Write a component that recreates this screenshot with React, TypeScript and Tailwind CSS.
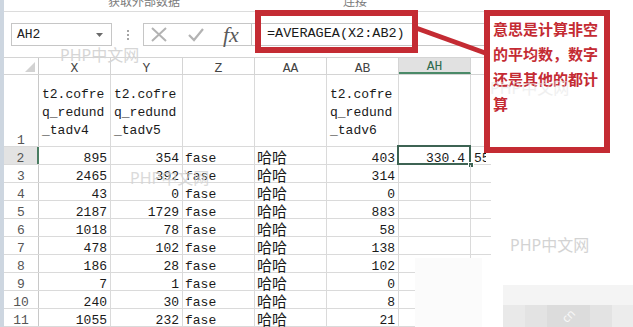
import React from 'react';

const mono = "font-['Liberation_Mono','Noto_Sans_CJK_SC',monospace]";

type Row = { n: number; x: string; y: string; ab: string };

const rows: Row[] = [
  { n: 2, x: '895', y: '354', ab: '403' },
  { n: 3, x: '2465', y: '392', ab: '314' },
  { n: 4, x: '43', y: '0', ab: '0' },
  { n: 5, x: '2187', y: '1729', ab: '883' },
  { n: 6, x: '1018', y: '78', ab: '58' },
  { n: 7, x: '478', y: '102', ab: '138' },
  { n: 8, x: '186', y: '28', ab: '102' },
  { n: 9, x: '7', y: '1', ab: '0' },
  { n: 10, x: '240', y: '30', ab: '8' },
  { n: 11, x: '1055', y: '232', ab: '21' },
];

const NumCell = ({ v }: { v: string }) => (
  <div className="w-[72px] shrink-0 border-r border-[#dadada] flex items-end justify-end pr-[3px]">
    <span className="leading-[11px] whitespace-nowrap">{v}</span>
  </div>
);

const TextCell = ({ v }: { v: string }) => (
  <div className="w-[72px] shrink-0 border-r border-[#dadada] flex items-end pl-[2px]">
    <span className="leading-[11px] whitespace-nowrap">{v}</span>
  </div>
);

const CjkCell = ({ v }: { v: string }) => (
  <div className="w-[72px] shrink-0 border-r border-[#dadada] flex items-end pl-[2px] font-['Noto_Sans_CJK_SC',sans-serif] text-[15px]">
    <span className="leading-[15px] whitespace-nowrap">{v}</span>
  </div>
);

const Wrapped = ({ lines }: { lines: string[] }) => (
  <div className="w-[72px] shrink-0 border-r border-[#dadada] flex flex-col justify-end pl-[3px] pb-[6px] leading-[18px]">
    {lines.map(l => (
      <span key={l} className="whitespace-nowrap">{l}</span>
    ))}
  </div>
);

const HeadCell = ({ label }: { label: string }) => (
  <div className="w-[72px] shrink-0 border-r border-[#d4d4d4] flex items-end justify-center text-[#444]">
    <span className="leading-[11px]">{label}</span>
  </div>
);

const Watermark = ({ className }: { className: string }) => (
  <div className={`absolute font-['Noto_Sans','Noto_Sans_CJK_SC',sans-serif] text-[16px] leading-[18px] pointer-events-none ${className}`}>
    PHP中文网
  </div>
);

const DataRow = ({ row }: { row: Row }) => {
  const sel = row.n === 2;
  return (
    <div className="flex h-[18px] border-b border-[#dadada]">
      <div
        className={
          sel
            ? 'w-[35px] shrink-0 flex items-end justify-center bg-[#e3e3e3] border-r-2 border-[#4a7d62] text-[#555]'
            : 'w-[35px] shrink-0 flex items-end justify-center border-r border-[#c8c8c8] text-[#555]'
        }
      >
        <span className="leading-[11px]">{row.n}</span>
      </div>
      <NumCell v={row.x} />
      <NumCell v={row.y} />
      <TextCell v="fase" />
      <CjkCell v="哈哈" />
      <NumCell v={row.ab} />
      <div className="relative w-[72px] shrink-0 border-r border-[#dadada] flex items-end justify-end pr-[5px]">
        {sel && (
          <>
            <span className="leading-[11px]">330.4</span>
            <div className="absolute -left-[2px] -top-[2px] -right-[1px] -bottom-[1px] border-2 border-[#3d6353]"></div>
            <div className="absolute -right-[4px] -bottom-[4px] w-[6px] h-[6px] bg-[#3d6353] border border-white"></div>
          </>
        )}
      </div>
      <div className="w-[20px] shrink-0 flex items-end pl-[3px]">
        {sel && <span className="leading-[11px] w-[12px] overflow-hidden whitespace-nowrap">55</span>}
      </div>
    </div>
  );
};

export default function App() {
  return (
    <div className={`relative w-[633px] h-[327px] overflow-hidden bg-white flex text-[13px] text-[#1a1a1a] ${mono}`}>
      {/* desktop edge */}
      <div className="w-[4px] shrink-0 bg-[#cdd6e0]"></div>

      <div className="w-[487px] shrink-0 flex flex-col">
        {/* ribbon remnant */}
        <div className="h-[12px] border-b border-[#dcdcdc] overflow-hidden flex font-['Noto_Sans_CJK_SC',sans-serif] text-[12px] text-[#7a7a7a]">
          <span className="ml-[104px] -mt-[6px] leading-[14px]">获取外部数据</span>
          <span className="ml-[163px] -mt-[6px] leading-[14px]">连接</span>
        </div>

        {/* formula bar */}
        <div className="mt-[11px] h-[23px] flex">
          <div className="ml-[7px] w-[101px] h-full border border-[#c6c6c6] flex items-center justify-between pl-[5px] pr-[8px]">
            <span className="text-[13px] text-[#222]">AH2</span>
            <svg width="7" height="4" viewBox="0 0 7 4">
              <path d="M0 0H7L3.5 4Z" fill="#6a6a6a" />
            </svg>
          </div>
          <div className="w-[31px] flex flex-col items-center justify-center gap-[2px]">
            <div className="w-[2px] h-[2px] bg-[#a5a5a5]"></div>
            <div className="w-[2px] h-[2px] bg-[#a5a5a5]"></div>
            <div className="w-[2px] h-[2px] bg-[#a5a5a5]"></div>
          </div>
          <div className="w-[109px] h-full border border-[#c6c6c6] flex items-center">
            <svg className="ml-[6px]" width="18" height="15" viewBox="0 0 18 15">
              <path d="M2 1L16 14M16 1L2 14" stroke="#b3b3b3" strokeWidth="2" />
            </svg>
            <svg className="ml-[20px]" width="16" height="15" viewBox="0 0 16 15">
              <path d="M1 8L6 13L15 2" stroke="#b3b3b3" strokeWidth="2.2" fill="none" />
            </svg>
            <span className="ml-[19px] font-['Liberation_Serif',serif] italic text-[22px] leading-[22px] text-[#5a5a5a]">fx</span>
          </div>
          <div className="flex-1 h-full border-y border-[#c6c6c6] flex items-center pl-[15px] text-[13.5px] whitespace-nowrap">
            =AVERAGEA(X2:AB2)
          </div>
        </div>

        {/* column headers */}
        <div className="mt-[11px] flex h-[18px] border-y border-[#d4d4d4]">
          <div className="w-[35px] shrink-0 border-r border-[#c8c8c8] flex items-end justify-end pr-[3px] pb-[2px]">
            <svg width="10" height="10" viewBox="0 0 10 10">
              <path d="M10 0V10H0Z" fill="#d2d2d2" />
            </svg>
          </div>
          <HeadCell label="X" />
          <HeadCell label="Y" />
          <HeadCell label="Z" />
          <HeadCell label="AA" />
          <HeadCell label="AB" />
          <div className="w-[72px] shrink-0 border-r border-[#d4d4d4] border-b-2 border-b-[#4a8a68] bg-[#e1e1e1] flex items-end justify-center text-[#2f6b4e]">
            <span className="leading-[10px]">AH</span>
          </div>
          <div className="w-[20px] shrink-0"></div>
        </div>

        {/* row 1 */}
        <div className="flex h-[72px] border-b border-[#dadada]">
          <div className="w-[35px] shrink-0 flex items-end justify-center border-r border-[#c8c8c8] text-[#555]">
            <span className="leading-[11px]">1</span>
          </div>
          <Wrapped lines={['t2.cofre', 'q_redund', '_tadv4']} />
          <Wrapped lines={['t2.cofre', 'q_redund', '_tadv5']} />
          <div className="w-[72px] shrink-0 border-r border-[#dadada]"></div>
          <div className="w-[72px] shrink-0 border-r border-[#dadada]"></div>
          <Wrapped lines={['t2.cofre', 'q_redund', '_tadv6']} />
          <div className="w-[72px] shrink-0 border-r border-[#dadada]"></div>
          <div className="w-[20px] shrink-0"></div>
        </div>

        {rows.map(r => (
          <DataRow key={r.n} row={r} />
        ))}
      </div>

      {/* cropped-away corner of the screenshot */}
      <div className="absolute left-[415px] top-[258px] w-[67px] h-[69px] bg-[#fbfbfb]"></div>
      <div className="absolute left-[482px] top-[258px] w-[21px] h-[69px] bg-white"></div>
      <div className="absolute left-[503px] top-[285px] w-[130px] h-[20px] bg-[#f4f4f4]"></div>
      <div className="absolute left-[503px] top-[305px] w-[130px] h-[22px] flex">
        <div className="w-[22px] bg-[#e9e9e9]"></div>
        <div className="w-[22px] bg-[#e3e3e3]"></div>
        <div className="w-[43px] bg-[#dcdcdc] flex items-center justify-center">
          <span className="-rotate-45 text-white text-[12px] font-['Noto_Sans',sans-serif] opacity-80">cn</span>
        </div>
        <div className="w-[22px] bg-[#e3e3e3]"></div>
        <div className="flex-1 bg-[#ececec]"></div>
      </div>

      {/* watermarks */}
      <Watermark className="left-[60px] top-[46px] text-[#d6d6d6]" />
      <Watermark className="left-[130px] top-[169px] text-[#d2d2d2] opacity-80" />
      <Watermark className="left-[510px] top-[236px] text-[#d3d3d3]" />

      {/* annotations */}
      <svg className="absolute left-0 top-0 pointer-events-none" width="633" height="327">
        <line x1="416" y1="28" x2="488" y2="54" stroke="#c42b33" strokeWidth="5" />
      </svg>
      <div className="absolute left-[255px] top-[10px] w-[163px] h-[43px] border-[6px] border-[#c42b33]"></div>
      <div className="absolute left-[484px] top-[10px] w-[126px] h-[143px] border-[6px] border-[#c42b33] bg-white pl-[3px] font-['Noto_Sans_CJK_SC',sans-serif] font-bold text-[15px] leading-[25px] text-[#c42b33] whitespace-nowrap">
        <div>意思是计算非空</div>
        <div>的平均数，数字</div>
        <div>还是其他的都计</div>
        <div>算</div>
        <Watermark className="left-[0px] top-[63px] text-[#e6e6e6] opacity-60 font-normal" />
      </div>
    </div>
  );
}
